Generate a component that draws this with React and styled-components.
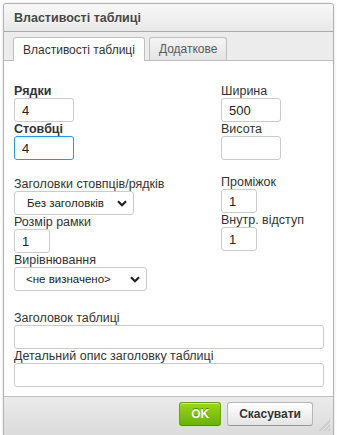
import React from "react";
import styled, { createGlobalStyle } from "styled-components";

const Global = createGlobalStyle`
  html, body { margin: 0; padding: 0; background: #fff; }
  body { font-family: "Liberation Sans", Arial, sans-serif; font-size: 12px; color: #333; }
  * { box-sizing: border-box; }
`;

const Page = styled.div`
  padding: 3px 3px 0 3px;
  width: 337px;
  height: 435px;
  overflow: hidden;
`;

const Dialog = styled.div`
  position: relative;
  width: 331px;
  height: 460px;
  border: 1px solid #b2b2b2;
  border-radius: 3px 3px 0 0;
  box-shadow: 0 0 3px rgba(0, 0, 0, 0.15);
  background: #ebebeb;
  display: flex;
  flex-direction: column;
`;

const Title = styled.div`
  height: 28px;
  padding: 1px 10px 0;
  display: flex;
  align-items: center;
  font-weight: bold;
  font-size: 12.5px;
  color: #474747;
  text-shadow: 0 1px 0 rgba(255, 255, 255, 0.75);
  background: linear-gradient(#f8f8f8, #e8e8e8);
  border-bottom: 1px solid #a9a9a9;
  border-radius: 2px 2px 0 0;
`;

const Tabs = styled.div`
  display: flex;
  gap: 4px;
  padding: 5px 9px 0;
  background: #ececec;
  border-bottom: 1px solid #bfbfbf;
`;

const Tab = styled.div`
  height: ${(p) => (p.$active ? 24 : 23)}px;
  margin-bottom: -1px;
  padding: 0 9px;
  display: flex;
  align-items: center;
  border: 1px solid #bfbfbf;
  border-bottom: none;
  border-radius: 3px 3px 0 0;
  font-size: 12px;
  color: ${(p) => (p.$active ? "#333" : "#595959")};
  background: ${(p) => (p.$active ? "#fff" : "linear-gradient(#f4f4f4, #e4e4e4)")};
`;

const Content = styled.div`
  background: #fff;
  height: 335px;
  padding: 23px 10px 0;
`;

const Columns = styled.div`
  display: grid;
  grid-template-columns: 207px 1fr;
`;

const Column = styled.div`
  display: flex;
  flex-direction: column;
`;

const Spacer = styled.div`
  height: ${(p) => p.$h}px;
`;

const Field = styled.div`
  display: flex;
  flex-direction: column;
`;

const Label = styled.label`
  display: block;
  height: 14px;
  line-height: 14px;
  font-size: 12.5px;
  color: #333;
  font-weight: ${(p) => (p.$required ? "bold" : "normal")};
  white-space: nowrap;
`;

const Input = styled.input`
  width: ${(p) => p.$w}px;
  height: 24px;
  margin: 0;
  padding: 0 7px;
  font-family: "Liberation Sans", Arial, sans-serif;
  font-size: 13px;
  color: #222;
  border: 1px solid ${(p) => (p.$focused ? "#139ff7" : "#c9cccf")};
  border-radius: 3px;
  background: #fff;
  outline: none;
`;

const SelectBox = styled.div`
  position: relative;
  width: ${(p) => p.$w}px;
  height: 24px;
  border: 1px solid #c9cccf;
  border-radius: 3px;
  background: #fff;
  display: flex;
  align-items: center;
  padding-left: ${(p) => p.$pl}px;
  font-size: ${(p) => p.$fs}px;
  color: #222;
  white-space: nowrap;
`;

const Chevron = styled.svg`
  position: absolute;
  right: 6px;
  top: 8px;
`;

const Bottom = styled.div`
  margin-top: 20px;
  display: flex;
  flex-direction: column;
`;

const Footer = styled.div`
  position: relative;
  flex: 1;
  border-top: 1px solid #bfbfbf;
  background: linear-gradient(#ebebeb, #d6d6d6 50px);
  display: flex;
  justify-content: flex-end;
  align-items: flex-start;
  gap: 6px;
  padding: 5px 20px 0 0;
`;

const Button = styled.div`
  height: 24px;
  padding: 0 11px;
  display: flex;
  align-items: center;
  font-weight: bold;
  font-size: 12px;
  border-radius: 3px;
  border: 1px solid ${(p) => (p.$ok ? "#62a60a" : "#b6b6b6")};
  border-bottom-color: ${(p) => (p.$ok ? "#4d9200" : "#999")};
  color: ${(p) => (p.$ok ? "#fff" : "#333")};
  text-shadow: ${(p) => (p.$ok ? "0 -1px 0 #55830c" : "0 1px 0 #fff")};
  background: ${(p) =>
    p.$ok ? "linear-gradient(#9ad717, #69b10b)" : "linear-gradient(#fff, #e4e4e4)"};
  box-shadow: 0 1px 0 rgba(255, 255, 255, 0.5) inset;
`;

const Grip = styled.svg`
  position: absolute;
  right: 3px;
  top: 22px;
`;

function Sel({ w, pl, fs, children }) {
  return (
    <SelectBox $w={w} $pl={pl} $fs={fs}>
      {children}
      <Chevron width="10" height="7" viewBox="0 0 10 7">
        <path d="M1 1.2 L5 5.2 L9 1.2" fill="none" stroke="#222" strokeWidth="2.2" />
      </Chevron>
    </SelectBox>
  );
}

export default function App() {
  return (
    <>
      <Global />
      <Page>
        <Dialog>
          <Title>Властивості таблиці</Title>
          <Tabs>
            <Tab $active>Властивості таблиці</Tab>
            <Tab>Додаткове</Tab>
          </Tabs>
          <Content>
            <Columns>
              <Column>
                <Field>
                  <Label $required>Рядки</Label>
                  <Input $w={60} defaultValue="4" />
                </Field>
                <Field>
                  <Label $required>Стовбці</Label>
                  <Input $w={60} defaultValue="4" $focused />
                </Field>
                <Spacer $h={17} />
                <Field>
                  <Label>Заголовки стовпців/рядків</Label>
                  <Sel w={120} pl={12} fs={11.5}>Без заголовків</Sel>
                </Field>
                <Field>
                  <Label>Розмір рамки</Label>
                  <Input $w={36} defaultValue="1" />
                </Field>
                <Field>
                  <Label>Вирівнювання</Label>
                  <Sel w={133} pl={11} fs={11.5}>&lt;не визначено&gt;</Sel>
                </Field>
              </Column>
              <Column>
                <Field>
                  <Label>Ширина</Label>
                  <Input $w={60} defaultValue="500" />
                </Field>
                <Field>
                  <Label>Висота</Label>
                  <Input $w={60} defaultValue="" />
                </Field>
                <Spacer $h={15} />
                <Field>
                  <Label>Проміжок</Label>
                  <Input $w={36} defaultValue="1" />
                </Field>
                <Field>
                  <Label>Внутр. відступ</Label>
                  <Input $w={36} defaultValue="1" />
                </Field>
              </Column>
            </Columns>
            <Bottom>
              <Field>
                <Label>Заголовок таблиці</Label>
                <Input $w={310} defaultValue="" />
              </Field>
              <Field>
                <Label>Детальний опис заголовку таблиці</Label>
                <Input $w={310} defaultValue="" />
              </Field>
            </Bottom>
          </Content>
          <Footer>
            <Button $ok>OK</Button>
            <Button>Скасувати</Button>
            <Grip width="12" height="12" viewBox="0 0 12 12">
              <path d="M12 0 L12 12 L0 12 Z" fill="#cfcfcf" />
              <path d="M12 4 L4 12 M12 8 L8 12" stroke="#e8e8e8" strokeWidth="1" />
            </Grip>
          </Footer>
        </Dialog>
      </Page>
    </>
  );
}
